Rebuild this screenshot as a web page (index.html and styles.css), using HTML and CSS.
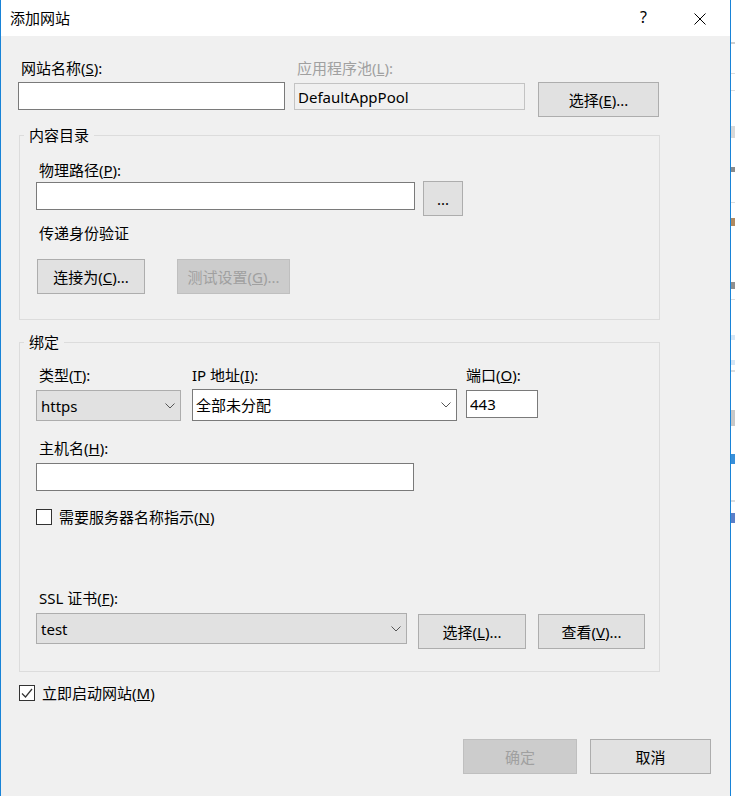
FILE: index.html
```html
<!DOCTYPE html>
<html lang="zh-CN">
<head>
<meta charset="utf-8">
<title>添加网站</title>
<link rel="stylesheet" href="styles.css">
</head>
<body>
<div class="screen">
  <div class="dialog">
    <header class="titlebar">
      <span class="title">添加网站</span>
      <span class="help">?</span>
      <svg class="close" width="12" height="12" viewBox="0 0 12 12"><path d="M0.5 0.5L11.5 11.5M11.5 0.5L0.5 11.5" stroke="#000" stroke-width="1" fill="none"/></svg>
    </header>
    <main class="content">
      <div class="row-top">
        <div class="field site">
          <label class="lbl">网站名称(<u>S</u>):</label>
          <input class="textbox" type="text">
        </div>
        <div class="field pool">
          <label class="lbl disabled">应用程序池(<u>L</u>):</label>
          <input class="textbox readonly" type="text" value="DefaultAppPool" readonly>
        </div>
        <button class="btn pool-btn">选择(<u>E</u>)...</button>
      </div>

      <fieldset class="group content-dir">
        <legend>内容目录</legend>
        <div class="gbody g1">
          <label class="lbl">物理路径(<u>P</u>):</label>
          <div class="path-row">
            <input class="textbox path" type="text">
            <button class="btn browse">...</button>
          </div>
          <div class="lbl pass">传递身份验证</div>
          <div class="btn-row">
            <button class="btn connect">连接为(<u>C</u>)...</button>
            <button class="btn test" disabled>测试设置(<u>G</u>)...</button>
          </div>
        </div>
      </fieldset>

      <fieldset class="group binding">
        <legend>绑定</legend>
        <div class="gbody g2">
          <div class="bind-row">
            <div class="field type-col">
              <label class="lbl">类型(<u>T</u>):</label>
              <div class="combo list type">https<svg class="chev" width="10" height="6" viewBox="0 0 10 6"><path d="M0.5 0.5L5 5L9.5 0.5" stroke="#555" fill="none"/></svg></div>
            </div>
            <div class="field ip-col">
              <label class="lbl nopad">IP 地址(<u>I</u>):</label>
              <div class="combo edit ip">全部未分配<svg class="chev" width="10" height="6" viewBox="0 0 10 6"><path d="M0.5 0.5L5 5L9.5 0.5" stroke="#555" fill="none"/></svg></div>
            </div>
            <div class="field port-col">
              <label class="lbl nopad">端口(<u>O</u>):</label>
              <input class="textbox port" type="text" value="443">
            </div>
          </div>
          <label class="lbl host-lbl">主机名(<u>H</u>):</label>
          <input class="textbox host" type="text">
          <div class="check-row sni">
            <span class="checkbox"></span>
            <span class="check-text">需要服务器名称指示(<u>N</u>)</span>
          </div>
          <label class="lbl ssl-lbl">SSL 证书(<u>F</u>):</label>
          <div class="ssl-row">
            <div class="combo list ssl">test<svg class="chev" width="10" height="6" viewBox="0 0 10 6"><path d="M0.5 0.5L5 5L9.5 0.5" stroke="#555" fill="none"/></svg></div>
            <button class="btn ssl-sel">选择(<u>L</u>)...</button>
            <button class="btn ssl-view">查看(<u>V</u>)...</button>
          </div>
        </div>
      </fieldset>

      <div class="check-row start">
        <span class="checkbox checked"><svg width="14" height="14" viewBox="0 0 14 14"><path d="M2 7.5L5.5 11L12 3" stroke="#333" stroke-width="1.2" fill="none"/></svg></span>
        <span class="check-text">立即启动网站(<u>M</u>)</span>
      </div>

      <div class="actions">
        <button class="btn ok" disabled>确定</button>
        <button class="btn cancel">取消</button>
      </div>
    </main>
  </div>
  <div class="backdrop"></div>
</div>
</body>
</html>
```

FILE: styles.css
```css
* { box-sizing: border-box; }
html, body { margin: 0; padding: 0; }
body {
  width: 735px;
  height: 796px;
  overflow: hidden;
  background: #fff;
  font-family: "Noto Sans", "Noto Sans CJK SC", sans-serif;
  font-size: 15px;
  color: #000;
}
.screen { display: flex; height: 796px; }
.dialog {
  width: 731px;
  height: 796px;
  flex: none;
  border-left: 1px solid #1883d7;
  border-right: 1px solid #1883d7;
  background: #f0f0f0;
  display: flex;
  flex-direction: column;
}
.backdrop {
  flex: 1;
  background: linear-gradient(to bottom,
    #fff 0 42px, #cfcfcf 42px 44px, #fff 44px 73px, #dcdcdc 73px 74px,
    #fff 74px 90px, #dcdcdc 90px 91px, #fff 91px 126px, #d9d9d9 126px 138px,
    #fff 138px 167px, #8a8a8a 167px 172px, #fff 172px 202px, #dcdcdc 202px 203px,
    #fff 203px 218px, #b08a60 218px 226px, #fff 226px 282px, #8f8f8f 282px 289px,
    #fff 289px 299px, #dcdcdc 299px 300px, #fff 300px 335px, #d6e6f5 335px 340px,
    #fff 340px 360px, #d6e6f5 360px 365px, #fff 365px 370px, #dcdcdc 370px 372px,
    #fff 372px 410px, #c8c8c8 410px 426px, #fff 426px 454px, #3a8fd8 454px 464px,
    #fff 464px 500px, #dcdcdc 500px 502px, #fff 502px 513px, #5b7fc8 513px 523px,
    #fff 523px);
}

/* title bar */
.titlebar {
  height: 36px;
  flex: none;
  background: #fff;
  display: flex;
  align-items: center;
  padding: 0 24px 0 9px;
}
.title { flex: 1; height: 20px; line-height: 20px; }
.help { font-size: 16px; line-height: 20px; height: 20px; margin-right: 47px; margin-top: -2px; }
.close { display: block; margin-top: 1px; }

/* content */
.content {
  flex: 1;
  display: flex;
  flex-direction: column;
  align-items: flex-start;
}
.row-top {
  display: flex;
  align-items: flex-start;
  padding: 22px 0 0 17px;
}
.field { display: flex; flex-direction: column; align-items: flex-start; }
.lbl {
  display: block;
  height: 20px;
  line-height: 20px;
  padding-left: 3px;
  white-space: nowrap;
}
.lbl.nopad { padding-left: 0; }
.lbl.disabled { color: #a0a0a0; }

.textbox {
  font: inherit;
  font-size: 15px;
  height: 28px;
  margin: 0;
  border: 1px solid #7a7a7a;
  border-radius: 0;
  background: #fff;
  padding: 0 0 0 3px;
  color: #000;
  outline: none;
}
.site .textbox { width: 267px; margin-top: 4px; }
.pool { margin-left: 9px; }
.pool .textbox {
  width: 231px;
  height: 27px;
  margin-top: 5px;
  background: #f0f0f0;
  border-color: #c3c3c3;
}

.btn {
  font: inherit;
  font-size: 15px;
  margin: 0;
  padding: 0;
  height: 35px;
  line-height: 20px;
  background: #e1e1e1;
  border: 1px solid #adadad;
  border-radius: 0;
  color: #000;
  text-align: center;
  white-space: nowrap;
}
.btn:disabled {
  background: #cccccc;
  border-color: #bfbfbf;
  color: #a0a0a0;
}
.pool-btn { width: 121px; margin: 24px 0 0 13px; }

/* group boxes */
.group {
  margin: 8px 0 0 18px;
  width: 641px;
  min-width: 0;
  padding: 0;
  border: 1px solid #dcdcdc;
}
.group legend {
  padding: 0 5px;
  margin-left: 4px;
  height: 20px;
  line-height: 20px;
  font-size: 15px;
}
.gbody {
  display: flex;
  flex-direction: column;
  align-items: flex-start;
  padding-left: 16px;
}
.g1 { padding-top: 15px; padding-bottom: 25px; }
.path-row { display: flex; align-items: flex-start; margin-top: 1px; }
.path { width: 379px; margin-top: 1px; }
.browse { width: 40px; margin-left: 8px; }
.pass { margin-top: 7px; }
.btn-row { display: flex; margin-top: 16px; }
.connect { width: 108px; margin-left: 1px; }
.test { width: 113px; margin-left: 32px; }

.binding { margin-top: 12px; }
.g2 { padding-top: 13px; padding-bottom: 22px; }
.bind-row { display: flex; align-items: flex-start; }
.type-col { width: 145px; }
.ip-col { width: 265px; margin-left: 11px; }
.port-col { width: 72px; margin-left: 9px; }

.combo {
  display: flex;
  align-items: center;
  justify-content: space-between;
  line-height: 20px;
  white-space: nowrap;
}
.combo.list {
  background: #e1e1e1;
  border: 1px solid #adadad;
  padding: 0 5px 0 4px;
}
.combo.edit {
  background: #fff;
  border: 1px solid #7a7a7a;
  padding: 0 5px 0 3px;
}
.chev { display: block; flex: none; }
.type { width: 145px; height: 31px; margin-top: 5px; }
.ip { width: 265px; height: 32px; margin-top: 4px; }
.port { width: 72px; margin-top: 5px; }

.host-lbl { margin-top: 17px; }
.host { width: 378px; margin-top: 5px; }

.check-row {
  display: flex;
  align-items: center;
  height: 20px;
  line-height: 20px;
  white-space: nowrap;
}
.checkbox {
  width: 16px;
  height: 16px;
  flex: none;
  border: 1px solid #333;
  background: #fff;
  margin-right: 7px;
  display: flex;
  align-items: center;
  justify-content: center;
}
.checkbox svg { display: block; }
.sni { margin-top: 16px; }

.ssl-lbl { margin-top: 61px; }
.ssl-row { display: flex; align-items: flex-start; margin-top: 5px; }
.ssl { width: 371px; height: 31px; }
.ssl-sel { width: 108px; margin: 1px 0 0 11px; }
.ssl-view { width: 107px; margin: 1px 0 0 12px; }

.start { margin: 11px 0 0 18px; }

.actions {
  align-self: stretch;
  display: flex;
  justify-content: flex-end;
  margin-top: 36px;
  padding-right: 19px;
}
.ok { width: 114px; }
.cancel { width: 121px; margin-left: 13px; }
```
